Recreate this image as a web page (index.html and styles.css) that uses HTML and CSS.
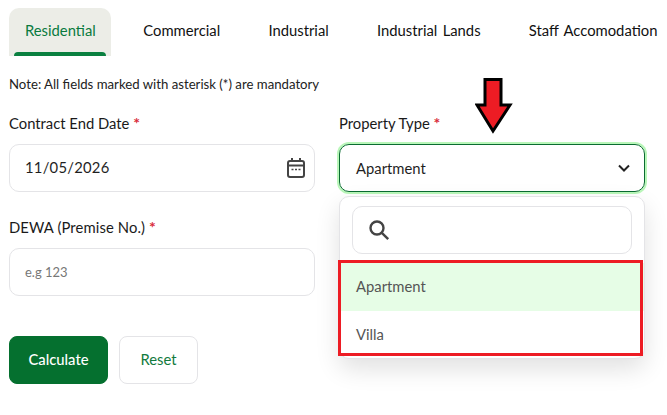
FILE: index.html
```html
<!DOCTYPE html>
<html lang="en">

<head>
    <meta charset="UTF-8">
    <meta name="viewport" content="width=device-width, initial-scale=1.0">
    <title>Calculator</title>
    <link rel="stylesheet" href="styles.css">
</head>

<body>
    <div class="tabs">
        <div class="tab active">Residential</div>
        <div class="tab">Commercial</div>
        <div class="tab">Industrial</div>
        <div class="tab">Industrial Lands</div>
        <div class="tab">Staff Accomodation</div>
    </div>

    <p class="note">Note: All fields marked with asterisk (*) are mandatory</p>

    <div class="form-grid">
        <div class="field">
            <label>Contract End Date <span class="req">*</span></label>
            <div class="input">
                <span>11/05/2026</span>
                <svg class="calendar" width="20" height="22" viewBox="0 0 20 22" fill="none" stroke="#444" stroke-width="2">
                    <rect x="2" y="4" width="16" height="16" rx="2"></rect>
                    <path d="M2 8.5h16M6 1v3M14 1v3"></path>
                    <path d="M5.5 12.5h2M9 12.5h2M12.5 12.5h2" stroke-width="1.6"></path>
                </svg>
            </div>
        </div>

        <div class="field">
            <label>Property Type <span class="req">*</span></label>
            <div class="input select">
                <span>Apartment</span>
                <svg width="12" height="8" viewBox="0 0 12 8" fill="none" stroke="#222" stroke-width="2">
                    <path d="M1 1.5l5 5 5-5"></path>
                </svg>
            </div>
            <div class="dropdown">
                <div class="search">
                    <svg width="22" height="22" viewBox="0 0 22 22" fill="none" stroke="#444" stroke-width="2.4">
                        <circle cx="9" cy="9" r="6.5"></circle>
                        <path d="M13.8 13.8l6.4 6.4"></path>
                    </svg>
                </div>
                <div class="option selected">Apartment</div>
                <div class="option">Villa</div>
            </div>
        </div>

        <div class="field">
            <label class="wide">DEWA (Premise No.) <span class="req">*</span></label>
            <div class="input placeholder">e.g 123</div>
        </div>
    </div>

    <div class="buttons">
        <button class="btn primary">Calculate</button>
        <button class="btn">Reset</button>
    </div>

    <!-- annotations on top of the screenshot -->
    <div class="red-box"></div>
    <svg class="arrow" width="38" height="58" viewBox="0 0 38 58">
        <path d="M10 1.5h16V27h9L18 53 2 27h8z" fill="#ed1c24" stroke="#000" stroke-width="3"></path>
    </svg>
</body>

</html>
```

FILE: styles.css
```css
* {
    box-sizing: border-box;
}

body {
    margin: 0;
    padding: 8px 9px;
    height: 415px;
    overflow: hidden;
    position: relative;
    background-color: #fff;
    font-family: "Lato", sans-serif;
    font-size: 14.8px;
    color: #1f1f1f;
}

.tabs {
    display: flex;
    gap: 16.3px;
    white-space: nowrap;
    word-spacing: 1.5px;
}

.tab {
    height: 48px;
    padding: 13px 16px 0;
    color: #111;
    border-radius: 10px 10px 0 0;
    flex-shrink: 0;
    position: relative;
}

.tab.active {
    width: 102px;
    background-color: #ecede7;
    color: #097a3e;
}

.tab.active::after {
    content: "";
    position: absolute;
    left: 5px;
    right: 5px;
    bottom: 0;
    height: 4px;
    background-color: #0a8040;
    border-radius: 4px 4px 0 0;
}

.note {
    margin: 20px 0 0;
    font-size: 13.2px;
    line-height: 16px;
    color: #222;
}

.form-grid {
    display: grid;
    grid-template-columns: 306px 306px;
    column-gap: 24px;
    row-gap: 24px;
    margin-top: 20px;
}

.field {
    position: relative;
}

.field label {
    display: block;
    height: 24px;
    line-height: 22px;
    margin-bottom: 8px;
    color: #1a1a1a;
}

.field label.wide {
    letter-spacing: 0.12px;
}

.req {
    color: #d92d3a;
    font-size: 16px;
    font-weight: 700;
}

.input {
    height: 48px;
    border: 1px solid #e4e4e7;
    border-radius: 10px;
    padding: 0 16px 2px 15px;
    display: flex;
    align-items: center;
    justify-content: space-between;
    letter-spacing: 0.25px;
}

.calendar {
    margin-right: -8px;
    margin-bottom: -2px;
}

.select {
    border-color: #0a6b31;
    box-shadow: 0 0 0 2px #b9f7b9;
    letter-spacing: 0;
    padding: 0 14px 0 16px;
}

.placeholder {
    font-size: 13px;
    color: #777;
    letter-spacing: 0;
    padding-bottom: 0;
}

.dropdown {
    position: absolute;
    top: 84px;
    left: 0;
    width: 306px;
    height: 163px;
    padding-top: 9px;
    background-color: #fff;
    border: 1px solid #e4e4e7;
    border-radius: 10px;
    box-shadow: 0 10px 24px rgba(0, 0, 0, 0.12);
    z-index: 2;
}

.search {
    height: 48px;
    margin: 0 12px 9px;
    padding: 0 0 1px 15px;
    border: 1px solid #e4e4e7;
    border-radius: 10px;
    display: flex;
    align-items: center;
}

.option {
    height: 48px;
    padding: 0 16px;
    line-height: 46px;
    color: #555;
}

.option.selected {
    background-color: #e6fde6;
}

.buttons {
    display: flex;
    gap: 11px;
    margin-top: 40px;
}

.btn {
    width: 79px;
    height: 48px;
    padding: 0 0 2px;
    background-color: #fff;
    border: 1px solid #e4e4e7;
    border-radius: 8px;
    font-family: inherit;
    font-size: 14.8px;
    color: #127a3e;
}

.btn.primary {
    width: 99px;
    background-color: #05702f;
    border-color: #05702f;
    color: #fff;
    font-weight: 500;
}

.red-box {
    position: absolute;
    left: 338px;
    top: 260px;
    width: 305px;
    height: 96px;
    border: 3px solid #ed1c24;
    z-index: 3;
}

.arrow {
    position: absolute;
    left: 475px;
    top: 78px;
    z-index: 3;
}
```
